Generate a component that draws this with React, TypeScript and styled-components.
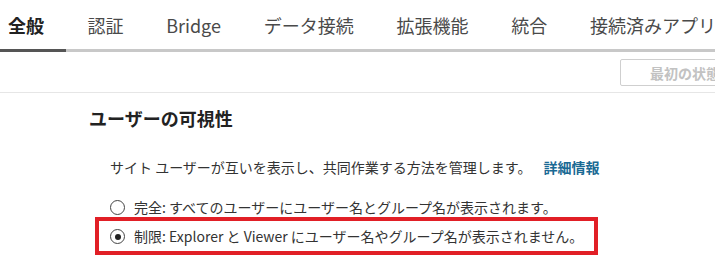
import React from "react";
import styled, { createGlobalStyle } from "styled-components";

const GlobalStyle = createGlobalStyle`
  html, body {
    margin: 0;
    padding: 0;
    overflow: hidden;
    background: #fff;
  }
  body {
    font-family: "Noto Sans CJK JP", "Noto Sans", "Liberation Sans", sans-serif;
    color: #333;
  }
`;

const tabs = ["全般", "認証", "Bridge", "データ接続", "拡張機能", "統合", "接続済みアプリ", "通知"];

const Page = styled.div`
  width: 715px;
  overflow: hidden;
`;

const TabBar = styled.nav`
  display: flex;
  height: 49px;
  border-bottom: 3px solid #c8c8c8;
  margin-left: -14px;
  white-space: nowrap;
`;

const Tab = styled.div<{ $active?: boolean }>`
  display: flex;
  align-items: center;
  padding: 1px 21.4px 0;
  margin-bottom: -3px;
  font-size: 18px;
  line-height: 24px;
  font-weight: ${(p) => (p.$active ? 700 : 400)};
  color: ${(p) => (p.$active ? "#222" : "#4a4a4a")};
  border-bottom: 3px solid ${(p) => (p.$active ? "#555" : "transparent")};

  &:first-child {
    padding-left: 22px;
    padding-right: 22px;
  }
`;

const Toolbar = styled.div`
  display: flex;
  justify-content: flex-end;
  align-items: center;
  height: 40px;
  border-bottom: 1px solid #e6e6e6;
`;

const ResetButton = styled.button`
  height: 27px;
  margin-right: -63px;
  margin-top: 1px;
  padding: 0 15px 0 29px;
  border: 1px solid #cfcfcf;
  border-radius: 2px;
  background: #fff;
  color: #c2c2c2;
  font-family: inherit;
  font-size: 14px;
  font-weight: 700;
  line-height: 20px;
  white-space: nowrap;
`;

const Section = styled.section`
  padding: 13px 0 0 89px;
`;

const Heading = styled.h2`
  margin: 0;
  font-size: 18px;
  line-height: 24px;
  font-weight: 700;
  color: #222;
`;

const Body = styled.div`
  padding-left: 21px;
  margin-top: 27px;
`;

const Description = styled.p`
  margin: 0 0 20px;
  font-size: 14px;
  line-height: 20px;
  color: #333;
`;

const MoreLink = styled.a`
  margin-left: 12px;
  color: #1a6a94;
  font-weight: 700;
  text-decoration: none;
`;

const Option = styled.label`
  display: flex;
  align-items: center;
  gap: 9px;
  font-size: 14px;
  line-height: 20px;
  color: #333;
  white-space: nowrap;
`;

const Highlight = styled.div`
  width: fit-content;
  margin-left: -15px;
  padding: 5px 11px 5px 11px;
  border: 4px solid #e11f26;
`;

const Radio = styled.span<{ $checked?: boolean }>`
  position: relative;
  width: 13px;
  height: 13px;
  border: 1px solid #444;
  border-radius: 50%;
  flex: none;
  margin-top: 1px;

  &::after {
    content: "";
    display: ${(p) => (p.$checked ? "block" : "none")};
    position: absolute;
    left: 3.5px;
    top: 3.5px;
    width: 6px;
    height: 6px;
    border-radius: 50%;
    background: #222;
  }
`;

export default function App() {
  return (
    <Page>
      <GlobalStyle />
      <TabBar>
        {tabs.map((t, i) => (
          <Tab key={t} $active={i === 0}>
            {t}
          </Tab>
        ))}
      </TabBar>
      <Toolbar>
        <ResetButton disabled>最初の状態に戻す</ResetButton>
      </Toolbar>
      <Section>
        <Heading>ユーザーの可視性</Heading>
        <Body>
          <Description>
            サイト ユーザーが互いを表示し、共同作業する方法を管理します。
            <MoreLink href="#">詳細情報</MoreLink>
          </Description>
          <Option>
            <Radio />
            完全: すべてのユーザーにユーザー名とグループ名が表示されます。
          </Option>
          <Highlight>
            <Option>
              <Radio $checked />
              制限: Explorer と Viewer にユーザー名やグループ名が表示されません。
            </Option>
          </Highlight>
        </Body>
      </Section>
    </Page>
  );
}
